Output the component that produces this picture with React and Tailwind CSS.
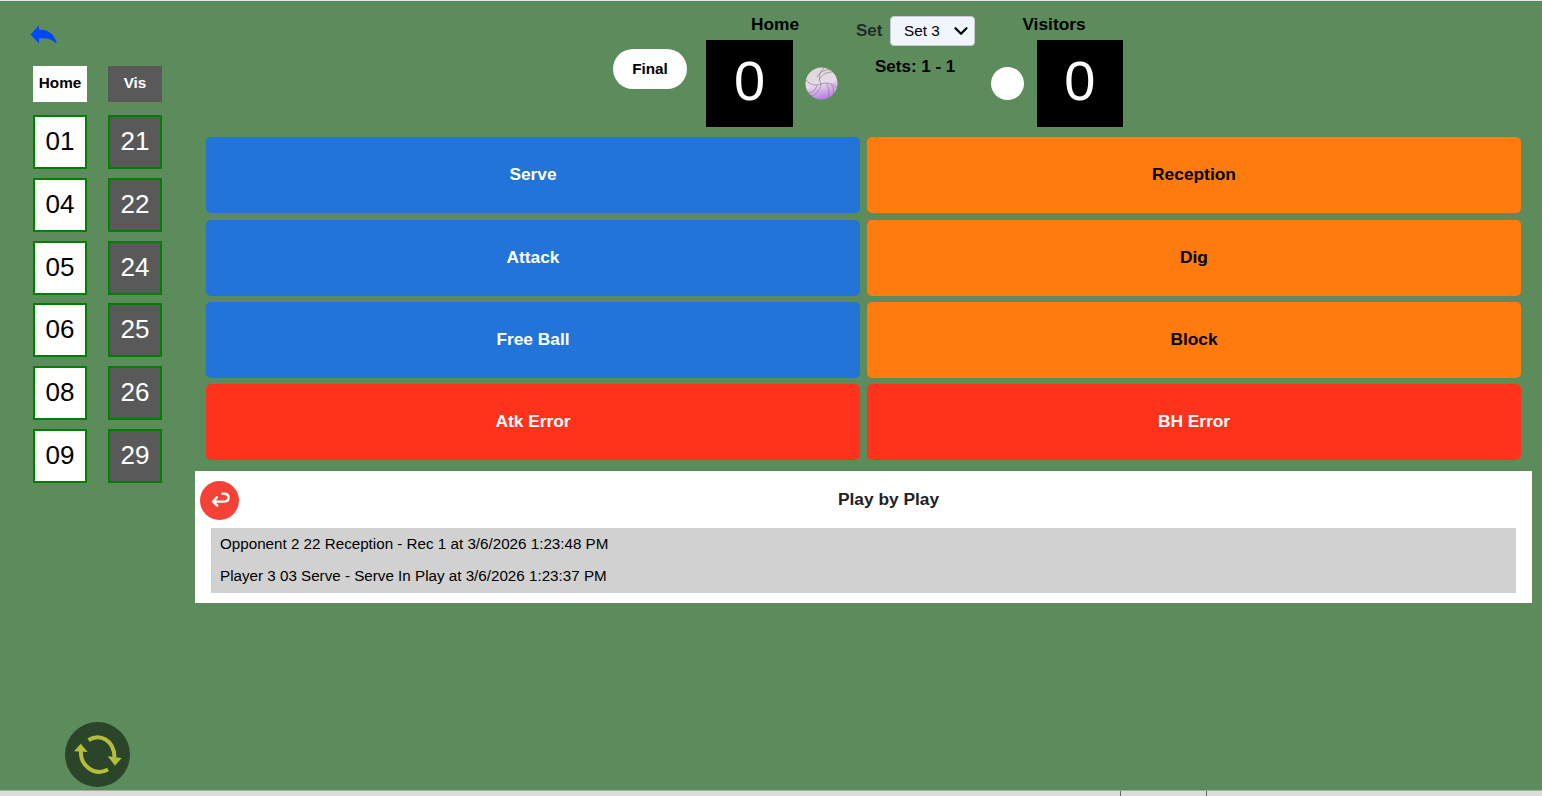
import React from "react";
import { ChevronDown } from "lucide-react";

const homePlayers = ["01", "04", "05", "06", "08", "09"];
const visPlayers = ["21", "22", "24", "25", "26", "29"];

const actions = [
  { label: "Serve", color: "bg-[#2274d8] text-white" },
  { label: "Reception", color: "bg-[#ff7b0d] text-black" },
  { label: "Attack", color: "bg-[#2274d8] text-white" },
  { label: "Dig", color: "bg-[#ff7b0d] text-black" },
  { label: "Free Ball", color: "bg-[#2274d8] text-white" },
  { label: "Block", color: "bg-[#ff7b0d] text-black" },
  { label: "Atk Error", color: "bg-[#ff331c] text-white" },
  { label: "BH Error", color: "bg-[#ff331c] text-white" },
];

function BackArrow() {
  return (
    <svg width="28" height="20" viewBox="0 0 28 20" className="block">
      <path
        d="M0.5 9.5 L9 0.5 V4.5 C18 4.5 24 9 26.5 17 V18.5 C22 14 16 12.5 9 13.5 V18.5 Z"
        fill="#0047ff"
      />
    </svg>
  );
}

function Volleyball() {
  return (
    <svg width="33" height="33" viewBox="0 0 33 33" className="block">
      <defs>
        <linearGradient id="ballFill" x1="0.35" y1="0" x2="0.6" y2="1">
          <stop offset="0" stopColor="#dcd8d4" />
          <stop offset="0.5" stopColor="#e6dbe8" />
          <stop offset="1" stopColor="#b477e4" />
        </linearGradient>
      </defs>
      <circle cx="16.5" cy="16.5" r="16" fill="url(#ballFill)" />
      <g fill="none" stroke="#85708c" strokeWidth="0.6">
        <path d="M16 17 C13 11 14 6 19 1" />
        <path d="M12 10 C14 6 18 3 24 2.5" />
        <path d="M14 13.5 C16 8 21 5 28 5" />
        <path d="M16 17 C21 15 27 16 32 21" />
        <path d="M21 16 C24 20 25 26 23 31" />
        <path d="M26 17.5 C29 21 29 25 28 28" />
        <path d="M16 17 C15 23 11 28 6 29" />
        <path d="M16 17 C10 19 5 18 1 13" />
        <path d="M12 18 C11 23 7 26 3 26" />
      </g>
    </svg>
  );
}

function ReturnIcon() {
  return (
    <svg width="20" height="16" viewBox="0 0 20 16" className="block">
      <path
        d="M12.5 1.8 H14.5 C17 1.8 18.5 3.5 18.5 5.6 C18.5 8 17 9.6 14.5 9.6 H3 M7 5.3 L3 9.6 L7.3 13.6"
        fill="none"
        stroke="white"
        strokeWidth="2.4"
        strokeLinecap="round"
        strokeLinejoin="round"
      />
    </svg>
  );
}

function RefreshIcon() {
  return (
    <svg width="65" height="65" viewBox="0 0 65 65" className="block">
      <g fill="none" stroke="#b5bd3a" strokeWidth="4">
        <path d="M23.5 18 C35 11 49 18 49.5 35" />
        <path d="M16 29 C15 43 29 55 43 47.5" />
      </g>
      <path d="M42.7 34.3 L56.7 36 L50 43.7 Z" fill="#b5bd3a" />
      <path d="M9 29.3 L22.7 30 L15.7 21.7 Z" fill="#b5bd3a" />
    </svg>
  );
}

function PlayerCell({ number, dark }) {
  return (
    <button
      className={`flex h-[54px] w-[54px] items-center justify-center border-2 border-[#008000] pb-[1px] text-[26px] ${
        dark ? "bg-[#595959] text-white" : "bg-white text-black"
      }`}
    >
      {number}
    </button>
  );
}

function ScoreBox({ value }) {
  return (
    <div className="flex h-[87px] w-[87px] items-center justify-center bg-black pb-[6px] text-[56px] text-white">
      {value}
    </div>
  );
}

export default function App() {
  return (
    <div className="relative flex h-screen w-full flex-col overflow-hidden bg-[#5c8c5c] font-['Liberation_Sans',Arial,sans-serif]">
      <div className="h-px w-full shrink-0 bg-[#e8e8e8]" />

      <div className="flex min-h-0 flex-1">
        {/* Player columns */}
        <aside className="w-[195px] shrink-0 pl-[33px]">
          <div className="ml-[-3px] mt-[24px] h-[20px]">
            <BackArrow />
          </div>
          <div className="mt-[21px] flex gap-[21px]">
            <div className="flex h-[36px] w-[54px] items-center justify-center bg-white pb-[2px] text-[15.3px] font-bold text-black">
              Home
            </div>
            <div className="flex h-[36px] w-[54px] items-center justify-center bg-[#595959] pb-[2px] text-[15.3px] font-bold text-white">
              Vis
            </div>
          </div>
          <div className="mt-[13px] flex gap-[21px]">
            <div className="flex flex-col gap-[8.8px]">
              {homePlayers.map((n) => (
                <PlayerCell key={n} number={n} />
              ))}
            </div>
            <div className="flex flex-col gap-[8.8px]">
              {visPlayers.map((n) => (
                <PlayerCell key={n} number={n} dark />
              ))}
            </div>
          </div>
        </aside>

        <main className="min-w-0 flex-1 pr-[10px]">
          {/* Scoreboard */}
          <div className="flex h-[136.4px] items-start pl-[418px]">
            <button className="mt-[48px] h-[40px] w-[74px] rounded-[20px] bg-white text-[15.3px] font-bold text-black">
              Final
            </button>

            <div className="ml-[19px] flex w-[132px] flex-col">
              <div className="mt-[11px] h-[28px] pl-[6px] text-center text-[17.33px] leading-[24px] font-bold text-black">
                Home
              </div>
              <div className="flex items-center gap-[12px]">
                <ScoreBox value="0" />
                <Volleyball />
              </div>
            </div>

            <div className="ml-[18px] w-[119px]">
              <div className="mt-[15px] flex h-[30px] items-center justify-between">
                <span className="text-[17px] font-bold text-[#222a2a]">Set</span>
                <div className="relative">
                  <select
                    defaultValue="Set 3"
                    className="h-[30px] w-[85px] appearance-none rounded-[4px] border border-[#c8ccd0] bg-[#f0f6fc] pl-[13px] text-[15.3px] text-black"
                  >
                    <option>Set 1</option>
                    <option>Set 2</option>
                    <option>Set 3</option>
                  </select>
                  <ChevronDown
                    size={22}
                    strokeWidth={2.5}
                    className="pointer-events-none absolute right-[3px] top-[4px] text-black"
                  />
                </div>
              </div>
              <div className="mt-[11px] pl-[19px] text-[17px] leading-[20px] font-bold whitespace-nowrap text-black">
                Sets: 1 - 1
              </div>
            </div>

            <div className="ml-[16px] flex w-[132px] flex-col">
              <div className="mt-[11px] h-[28px] pr-[6px] text-center text-[17.33px] leading-[24px] font-bold text-black">
                Visitors
              </div>
              <div className="flex items-center gap-[13px]">
                <div className="h-[33px] w-[33px] rounded-full bg-white" />
                <ScoreBox value="0" />
              </div>
            </div>
          </div>

          {/* Action buttons */}
          <div className="mx-[11px] grid grid-cols-2 gap-x-[7px] gap-y-[6.3px]">
            {actions.map((a) => (
              <button key={a.label} className={`h-[76px] rounded-[5px] text-[17.33px] font-bold ${a.color}`}>
                {a.label}
              </button>
            ))}
          </div>

          {/* Play by play */}
          <section className="mt-[10.7px] h-[132px] bg-white">
            <div className="flex h-[57px] items-start pl-[5px] pt-[10px]">
              <button className="flex h-[39px] w-[39px] shrink-0 items-center justify-center rounded-full bg-[#f44336]">
                <ReturnIcon />
              </button>
              <h2 className="flex-1 pl-[6px] pt-[6px] text-center text-[17.33px] font-bold text-[#222]">Play by Play</h2>
            </div>
            <ul className="mx-[16px] h-[65px] bg-[#d1d1d1] pl-[9px] text-[15.2px] text-black">
              <li className="flex h-[32px] items-center">Opponent 2 22 Reception - Rec 1 at 3/6/2026 1:23:48 PM</li>
              <li className="flex h-[33px] items-center">Player 3 03 Serve - Serve In Play at 3/6/2026 1:23:37 PM</li>
            </ul>
          </section>
        </main>
      </div>

      {/* Floating sync button */}
      <button className="absolute bottom-[9px] left-[65px] h-[65px] w-[65px] rounded-full bg-[#2b452b]">
        <RefreshIcon />
      </button>

      {/* Window status strip */}
      <div className="flex h-[6px] w-full shrink-0 border-t border-[#a8a8a8] bg-[#dcdcd8]">
        <div className="ml-[1120px] h-full w-[87px] border-x border-[#666]" />
      </div>
    </div>
  );
}
